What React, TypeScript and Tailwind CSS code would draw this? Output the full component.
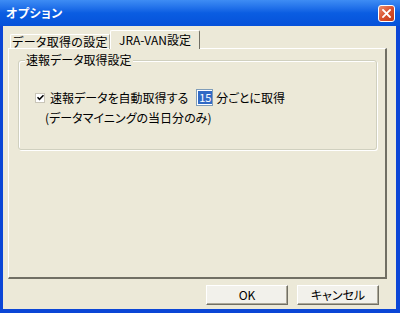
import React from "react";

export default function App() {
  return (
    <div className="w-[400px] h-[313px] bg-[#0B46D6] flex flex-col font-['Noto_Sans_CJK_JP','Noto_Sans',sans-serif] text-[12px] leading-none text-black [font-feature-settings:'palt']">
      {/* Title bar */}
      <div className="h-[26px] flex items-center justify-between pl-[6px] pr-[5px] bg-gradient-to-b from-[#3E8CF4] via-[#0A5DE2] to-[#0651D9]">
        <span className="text-white font-bold text-[12px] tracking-[0.5px]">オプション</span>
        <div className="w-[17px] h-[17px] rounded-[3px] border border-white bg-gradient-to-br from-[#E98D6F] via-[#D9512E] to-[#C13A17] flex items-center justify-center">
          <svg width="9" height="9" viewBox="0 0 9 9">
            <path d="M1 1 L8 8 M8 1 L1 8" stroke="white" strokeWidth="1.8" strokeLinecap="square" />
          </svg>
        </div>
      </div>

      {/* Body */}
      <div className="flex-1 ml-[3px] mr-[4px] mb-[4px] bg-[#ECE9D8] flex flex-col pl-[5px] pr-[9px] pt-[4px]">
        {/* Tabs */}
        <div className="flex items-end h-[19px] pl-[2px] -mb-px relative z-10">
          <div className="w-[100px] h-[15px] flex items-center justify-center border-t border-l border-white border-r border-r-[#ACA899] rounded-tl-[2px] tracking-[0.3px]">
            データ取得の設定
          </div>
          <div className="w-[90px] h-[19px] flex items-center justify-center bg-[#ECE9D8] border-t border-l border-white border-r border-r-[#716F64] rounded-tl-[2px] rounded-tr-[2px]">
            JRA-VAN設定
          </div>
        </div>

        {/* Panel */}
        <div className="h-[231px] border-t border-l border-white border-r-2 border-b-2 border-r-[#716F64] border-b-[#716F64] pt-[11px] pl-[9px] pr-[8px]">
          <div className="relative h-[90px] border border-[#D0D0BF] rounded-[3px] shadow-[inset_1px_1px_0_#fff,1px_1px_0_#fff]">
            <span className="absolute -top-[7px] left-[6px] px-[1px] bg-[#ECE9D8]">速報データ取得設定</span>
            <div className="pt-[28px] pl-[16px] flex flex-col gap-[4px]">
              <div className="flex items-center h-[17px]">
                <div className="w-[10px] h-[10px] bg-white border border-[#C9C5B8] flex items-center justify-center">
                  <svg width="7" height="7" viewBox="0 0 7 7">
                    <path d="M0.5 3.2 L2.5 5.3 L6.5 1.2" stroke="#000" strokeWidth="1.5" fill="none" />
                  </svg>
                </div>
                <span className="ml-[5px]">速報データを自動取得する</span>
                <div className="ml-[8px] w-[17px] h-[17px] bg-white border border-[#7F9DB9] flex items-center pl-[1px]">
                  <span className="bg-[#316AC5] text-white text-[11px] h-[13px] w-[14px] flex items-center justify-center">15</span>
                </div>
                <span className="ml-[3px]">分ごとに取得</span>
              </div>
              <div className="pl-[10px] h-[15px] flex items-center">(データマイニングの当日分のみ)</div>
            </div>
          </div>
        </div>

        {/* Buttons */}
        <div className="flex justify-end gap-[9px] mt-[6px] pr-[8px]">
          <button className="w-[82px] h-[20px] bg-[#F2F1EB] border-t border-l border-white border-r border-b border-r-[#716F64] border-b-[#716F64] shadow-[inset_-1px_-1px_0_#ACA899] flex items-center justify-center">
            OK
          </button>
          <button className="w-[82px] h-[20px] bg-[#F2F1EB] border-t border-l border-white border-r border-b border-r-[#716F64] border-b-[#716F64] shadow-[inset_-1px_-1px_0_#ACA899] flex items-center justify-center">
            キャンセル
          </button>
        </div>
      </div>
    </div>
  );
}
